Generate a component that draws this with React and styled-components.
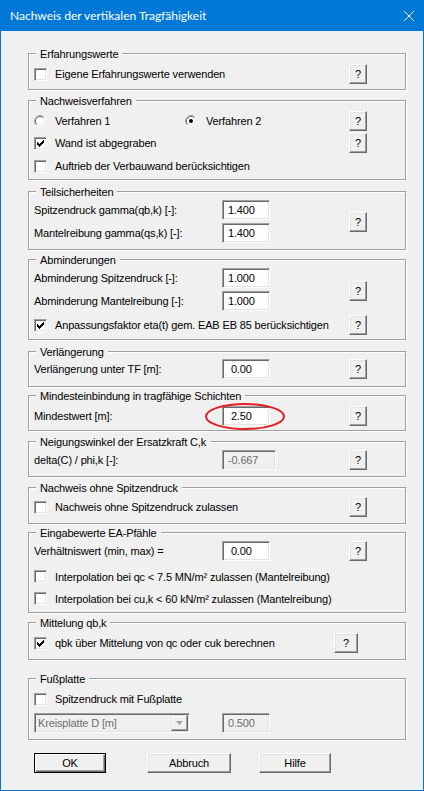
import React from "react";
import styled, { createGlobalStyle } from "styled-components";

const GlobalStyle = createGlobalStyle`
  html, body {
    margin: 0;
    padding: 0;
    background: #ffffff;
  }
  body {
    font-family: "Liberation Sans", Arial, sans-serif;
    font-size: 11px;
    letter-spacing: -0.15px;
    color: #000;
  }
`;

const Dialog = styled.div`
  width: 424px;
  height: 791px;
  box-sizing: border-box;
  background: #f0f0f0;
  border: 1px solid #0078d7;
  border-top: 0;
  overflow: hidden;
`;

const TitleBar = styled.div`
  height: 31px;
  margin: 0 -1px;
  padding: 0 10px;
  display: flex;
  align-items: center;
  justify-content: space-between;
  background: #0078d7;
  color: #fff;
  font-family: Lato, "Liberation Sans", sans-serif;
  font-size: 12px;
  letter-spacing: 0;
`;

const Content = styled.div`
  padding-left: 27px;
`;

const Group = styled.div`
  margin-top: ${p => p.$top}px;
  width: 378px;
  height: ${p => p.$h}px;
  box-sizing: border-box;
  border: 1px solid #a0a0a0;
  box-shadow: inset 1px 1px 0 #fff, 1px 1px 0 #fff;
  padding: 0 37px 0 5px;
`;

const Legend = styled.div`
  width: fit-content;
  height: 14px;
  line-height: 14px;
  margin: -7px 0 0 2px;
  padding: 0 4px;
  background: #f0f0f0;
  white-space: nowrap;
`;

const Body = styled.div`
  display: grid;
  grid-template-columns: 188px 127px 18px;
  grid-template-rows: ${p => p.$rows};
  padding-top: ${p => p.$pt || 0}px;
  align-items: center;
`;

const CheckRow = styled.div`
  grid-column: 1 / 3;
  grid-row: ${p => p.$row};
  display: flex;
  align-items: center;
  white-space: nowrap;
`;

const Box = styled.span`
  flex: none;
  display: flex;
  width: 13px;
  height: 13px;
  box-sizing: border-box;
  margin-right: 8px;
  border: 1px solid;
  border-color: #a0a0a0 #fff #fff #a0a0a0;
  box-shadow: inset 1px 1px 0 #696969, inset -1px -1px 0 #e3e3e3;
  background: #fff;
`;

const RadioItem = styled.div`
  width: ${p => p.$w ? `${p.$w}px` : "auto"};
  display: flex;
  align-items: center;
  svg {
    flex: none;
    margin-right: 9px;
  }
`;

const FieldLabel = styled.div`
  grid-column: 1;
  grid-row: ${p => p.$row};
  white-space: nowrap;
`;

const Field = styled.div`
  grid-column: 2;
  grid-row: ${p => p.$row};
  position: relative;
  display: flex;
  align-items: center;
`;

const TextBox = styled.div`
  width: ${p => p.$w || 48}px;
  height: 20px;
  box-sizing: border-box;
  padding-left: 5px;
  display: flex;
  align-items: center;
  white-space: pre;
  border: 1px solid;
  border-color: #a0a0a0 #fff #fff #a0a0a0;
  box-shadow: inset 1px 1px 0 #696969, inset -1px -1px 0 #e3e3e3;
  background: ${p => (p.$disabled ? "#f0f0f0" : "#fff")};
  color: ${p => (p.$disabled ? "#6d6d6d" : "#000")};
`;

const Marker = styled.svg`
  position: absolute;
  left: -17px;
  top: -3px;
  pointer-events: none;
`;

const HelpButton = styled.div`
  grid-column: 3;
  grid-row: ${p => p.$row};
  width: ${p => p.$w || 18}px;
  height: 20px;
  margin-left: ${p => p.$ml || 0}px;
  box-sizing: border-box;
  display: flex;
  align-items: center;
  justify-content: center;
  border: 1px solid;
  border-color: #fff #696969 #696969 #fff;
  box-shadow: inset -1px -1px 0 #a0a0a0, inset 1px 1px 0 #e3e3e3;
  background: #f0f0f0;
`;

const Combo = styled.div`
  grid-column: 1;
  grid-row: ${p => p.$row};
  width: 156px;
  height: 20px;
  box-sizing: border-box;
  display: flex;
  align-items: center;
  padding-left: 3px;
  border: 1px solid;
  border-color: #a0a0a0 #fff #fff #a0a0a0;
  box-shadow: inset 1px 1px 0 #696969, inset -1px -1px 0 #e3e3e3;
  background: #f0f0f0;
  color: #6d6d6d;
`;

const ComboText = styled.span`
  flex: 1;
`;

const ComboArrow = styled.span`
  width: 17px;
  height: 16px;
  margin-right: 1px;
  box-sizing: border-box;
  display: flex;
  align-items: center;
  justify-content: center;
  border: 1px solid;
  border-color: #e3e3e3 #696969 #696969 #e3e3e3;
  box-shadow: inset -1px -1px 0 #a0a0a0, inset 1px 1px 0 #fff;
  background: #f0f0f0;
`;

const Footer = styled.div`
  display: flex;
  margin-top: 13px;
  padding-left: 6px;
`;

const PushButton = styled.div`
  width: ${p => p.$w}px;
  height: 20px;
  margin-left: ${p => p.$ml || 0}px;
  box-sizing: border-box;
  display: flex;
  align-items: center;
  justify-content: center;
  border: 1px solid;
  border-color: ${p => (p.$default ? "#000" : "#fff #696969 #696969 #fff")};
  box-shadow: ${p =>
    p.$default
      ? "inset 1px 1px 0 #fff, inset -1px -1px 0 #696969, inset -2px -2px 0 #a0a0a0"
      : "inset -1px -1px 0 #a0a0a0, inset 1px 1px 0 #e3e3e3"};
  background: #f0f0f0;
`;

const CloseIcon = () => (
  <svg width="10" height="10" viewBox="0 0 10 10">
    <path d="M0 0L10 10M10 0L0 10" stroke="#fff" strokeWidth="1" />
  </svg>
);

const Tick = () => (
  <svg width="11" height="11" viewBox="1 1 11 11" shapeRendering="crispEdges">
    <path
      d="M9 3h1v1h-1z M8 4h2v1h-2z M3 5h1v1h-1z M7 5h3v1h-3z M3 6h2v1h-2z M6 6h3v1h-3z M3 7h5v1h-5z M4 8h3v1h-3z M5 9h1v1h-1z"
      fill="#000"
    />
  </svg>
);

const Check = ({ checked, row, children }) => (
  <CheckRow $row={row}>
    <Box>{checked && <Tick />}</Box>
    {children}
  </CheckRow>
);

const RadioDot = ({ on }) => (
  <svg width="12" height="12" viewBox="0 0 12 12">
    <circle cx="6" cy="6" r="4.5" fill="#fff" />
    <path d="M2.11 9.89A5.5 5.5 0 0 1 9.89 2.11" stroke="#a0a0a0" fill="none" />
    <path d="M9.89 2.11A5.5 5.5 0 0 1 2.11 9.89" stroke="#fff" fill="none" />
    <path d="M2.82 9.18A4.5 4.5 0 0 1 9.18 2.82" stroke="#696969" fill="none" />
    <path d="M9.18 2.82A4.5 4.5 0 0 1 2.82 9.18" stroke="#e3e3e3" fill="none" />
    {on && <circle cx="6" cy="6" r="2" fill="#000" />}
  </svg>
);

const Help = props => <HelpButton {...props}>?</HelpButton>;

export default function App() {
  return (
    <>
      <GlobalStyle />
      <Dialog>
        <TitleBar>
          <span>Nachweis der vertikalen Tragfähigkeit</span>
          <CloseIcon />
        </TitleBar>
        <Content>
          <Group $top={22} $h={37}>
            <Legend>Erfahrungswerte</Legend>
            <Body $rows="20px" $pt={3}>
              <Check row={1}>Eigene Erfahrungswerte verwenden</Check>
              <Help $row={1} />
            </Body>
          </Group>

          <Group $top={10} $h={80}>
            <Legend>Nachweisverfahren</Legend>
            <Body $rows="22px 22px 24px" $pt={2}>
              <CheckRow $row={1}>
                <RadioItem $w={151}>
                  <RadioDot />
                  Verfahren 1
                </RadioItem>
                <RadioItem>
                  <RadioDot on />
                  Verfahren 2
                </RadioItem>
              </CheckRow>
              <Help $row={1} />
              <Check row={2} checked>
                Wand ist abgegraben
              </Check>
              <Help $row={2} />
              <Check row={3}>Auftrieb der Verbauwand berücksichtigen</Check>
            </Body>
          </Group>

          <Group $top={11} $h={59}>
            <Legend>Teilsicherheiten</Legend>
            <Body $rows="22px 24px">
              <FieldLabel $row={1}>Spitzendruck gamma(qb,k) [-]:</FieldLabel>
              <Field $row={1}>
                <TextBox>1.400</TextBox>
              </Field>
              <FieldLabel $row={2}>Mantelreibung gamma(qs,k) [-]:</FieldLabel>
              <Field $row={2}>
                <TextBox>1.400</TextBox>
              </Field>
              <Help $row="1 / 3" />
            </Body>
          </Group>

          <Group $top={9} $h={81}>
            <Legend>Abminderungen</Legend>
            <Body $rows="21px 26px 22px">
              <FieldLabel $row={1}>Abminderung Spitzendruck [-]:</FieldLabel>
              <Field $row={1}>
                <TextBox>1.000</TextBox>
              </Field>
              <FieldLabel $row={2}>Abminderung Mantelreibung [-]:</FieldLabel>
              <Field $row={2}>
                <TextBox>1.000</TextBox>
              </Field>
              <Help $row="1 / 3" />
              <Check row={3} checked>
                Anpassungsfaktor eta(t) gem. EAB EB 85 berücksichtigen
              </Check>
              <Help $row={3} />
            </Body>
          </Group>

          <Group $top={11} $h={36}>
            <Legend>Verlängerung</Legend>
            <Body $rows="20px">
              <FieldLabel $row={1}>Verlängerung unter TF [m]:</FieldLabel>
              <Field $row={1}>
                <TextBox>{" 0.00"}</TextBox>
              </Field>
              <Help $row={1} />
            </Body>
          </Group>

          <Group $top={8} $h={36}>
            <Legend>Mindesteinbindung in tragfähige Schichten</Legend>
            <Body $rows="26px">
              <FieldLabel $row={1}>Mindestwert [m]:</FieldLabel>
              <Field $row={1}>
                <TextBox>{" 2.50"}</TextBox>
                <Marker width="80" height="27" viewBox="0 0 80 27">
                  <ellipse cx="40" cy="13.5" rx="39" ry="12.5" fill="none" stroke="#e31b23" strokeWidth="2" />
                </Marker>
              </Field>
              <Help $row={1} />
            </Body>
          </Group>

          <Group $top={10} $h={36}>
            <Legend>Neigungswinkel der Ersatzkraft C,k</Legend>
            <Body $rows="21px">
              <FieldLabel $row={1}>delta(C) / phi,k [-]:</FieldLabel>
              <Field $row={1}>
                <TextBox $w={54} $disabled>
                  -0.667
                </TextBox>
              </Field>
              <Help $row={1} />
            </Body>
          </Group>

          <Group $top={10} $h={37}>
            <Legend>Nachweis ohne Spitzendruck</Legend>
            <Body $rows="24px">
              <Check row={1}>Nachweis ohne Spitzendruck zulassen</Check>
              <Help $row={1} />
            </Body>
          </Group>

          <Group $top={8} $h={81}>
            <Legend>Eingabewerte EA-Pfähle</Legend>
            <Body $rows="22px 29px 15px">
              <FieldLabel $row={1}>Verhältniswert (min, max) =</FieldLabel>
              <Field $row={1}>
                <TextBox>{" 0.00"}</TextBox>
              </Field>
              <Help $row={1} />
              <Check row={2}>Interpolation bei qc &lt; 7.5 MN/m² zulassen (Mantelreibung)</Check>
              <Check row={3}>Interpolation bei cu,k &lt; 60 kN/m² zulassen (Mantelreibung)</Check>
            </Body>
          </Group>

          <Group $top={9} $h={38}>
            <Legend>Mittelung qb,k</Legend>
            <Body $rows="26px">
              <Check row={1} checked>
                qbk über Mittelung von qc oder cuk berechnen
              </Check>
              <Help $row={1} $w={24} $ml={-15} />
            </Body>
          </Group>

          <Group $top={18} $h={62}>
            <Legend>Fußplatte</Legend>
            <Body $rows="26px 21px">
              <Check row={1}>Spitzendruck mit Fußplatte</Check>
              <Combo $row={2}>
                <ComboText>Kreisplatte D [m]</ComboText>
                <ComboArrow>
                  <svg width="7" height="4" viewBox="0 0 7 4">
                    <path d="M0 0h7L3.5 4z" fill="#a0a0a0" />
                  </svg>
                </ComboArrow>
              </Combo>
              <Field $row={2}>
                <TextBox $disabled>0.500</TextBox>
              </Field>
            </Body>
          </Group>

          <Footer>
            <PushButton $w={72} $default>
              OK
            </PushButton>
            <PushButton $w={84} $ml={41}>
              Abbruch
            </PushButton>
            <PushButton $w={72} $ml={28}>
              Hilfe
            </PushButton>
          </Footer>
        </Content>
      </Dialog>
    </>
  );
}
